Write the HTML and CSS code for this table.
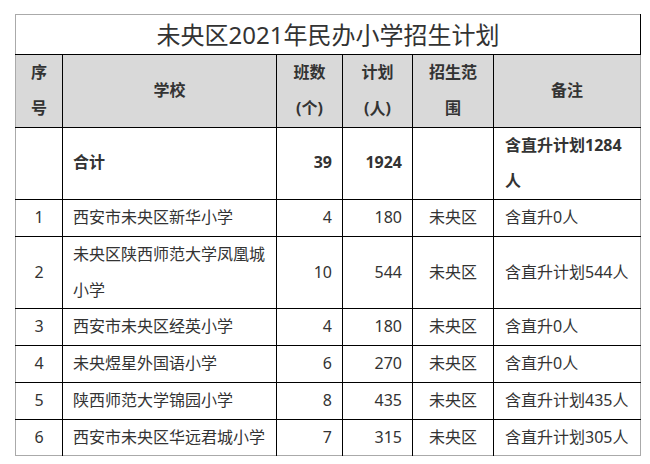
FILE: index.html
```html
<!DOCTYPE html>
<html lang="zh-CN">
<head>
<meta charset="utf-8">
<link rel="stylesheet" href="styles.css">
</head>
<body>
<div class="wrap">
<table class="plan">
  <colgroup>
    <col class="c1"><col class="c2"><col class="c3"><col class="c4"><col class="c5"><col class="c6">
  </colgroup>
  <tr class="title-row"><td colspan="6" class="title">未央区2021年民办小学招生计划</td></tr>
  <tr class="head">
    <th>序<br>号</th>
    <th>学校</th>
    <th>班数<br>(个)</th>
    <th>计划<br>(人)</th>
    <th>招生范<br>围</th>
    <th class="last">备注</th>
  </tr>
  <tr class="total">
    <td class="idx"></td>
    <td class="name">合计</td>
    <td class="num">39</td>
    <td class="num">1924</td>
    <td class="area"></td>
    <td class="note last">含直升计划1284人</td>
  </tr>
  <tr>
    <td class="idx">1</td><td class="name">西安市未央区新华小学</td><td class="num">4</td><td class="num">180</td><td class="area">未央区</td><td class="note last">含直升0人</td>
  </tr>
  <tr>
    <td class="idx">2</td><td class="name">未央区陕西师范大学凤凰城小学</td><td class="num">10</td><td class="num">544</td><td class="area">未央区</td><td class="note last">含直升计划544人</td>
  </tr>
  <tr>
    <td class="idx">3</td><td class="name">西安市未央区经英小学</td><td class="num">4</td><td class="num">180</td><td class="area">未央区</td><td class="note last">含直升0人</td>
  </tr>
  <tr>
    <td class="idx">4</td><td class="name">未央煜星外国语小学</td><td class="num">6</td><td class="num">270</td><td class="area">未央区</td><td class="note last">含直升0人</td>
  </tr>
  <tr>
    <td class="idx">5</td><td class="name">陕西师范大学锦园小学</td><td class="num">8</td><td class="num">435</td><td class="area">未央区</td><td class="note last">含直升计划435人</td>
  </tr>
  <tr class="final">
    <td class="idx">6</td><td class="name">西安市未央区华远君城小学</td><td class="num">7</td><td class="num">315</td><td class="area">未央区</td><td class="note last">含直升计划305人</td>
  </tr>
</table>
</div>
</body>
</html>
```

FILE: styles.css
```css
html, body {
  margin: 0;
  padding: 0;
  background: #fff;
}
.wrap {
  padding: 14px 0 0 15px;
}
.plan {
  border-collapse: collapse;
  table-layout: fixed;
  width: 625px;
  border: 1px solid #aaaaaa;
  font-family: "Noto Sans", "Noto Sans CJK SC", sans-serif;
  font-size: 16px;
  color: #333;
}
.c1 { width: 47px; }
.c2 { width: 214px; }
.c3 { width: 66px; }
.c4 { width: 70px; }
.c5 { width: 81px; }
.c6 { width: 147px; }

.plan td, .plan th {
  border-right: 1px solid #000;
  border-bottom: 1px solid #000;
  padding: 0 10px;
  line-height: 35.75px;
  vertical-align: middle;
}
.plan .last { border-right: none; }
.plan .final td { border-bottom: none; }

.plan .title {
  text-align: center;
  font-size: 24px;
  line-height: 39px;
  color: #333;
  font-weight: normal;
}
.head th {
  background: #d9d9d9;
  font-weight: bold;
  text-align: center;
  color: #333;
}
.idx { text-align: center; }
.plan .name { padding: 0 4px 0 10px; }
.num { text-align: right; }
.area { text-align: center; }
.plan .note { padding: 0 4px 0 11px; }
.total td { font-weight: bold; }
```
